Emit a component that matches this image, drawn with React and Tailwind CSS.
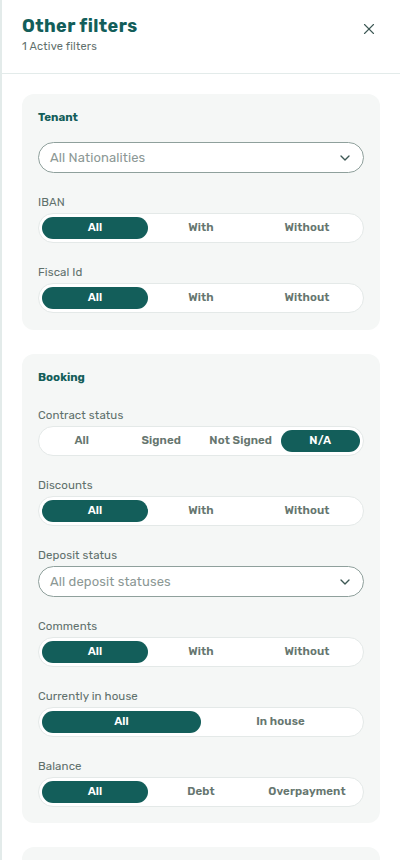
import React, { useState } from "react";
import { X, ChevronDown } from "lucide-react";

const Segmented = ({ options, value }) => (
  <div className="flex h-[30px] rounded-full border border-[#e4e9e8] bg-white p-[3px]">
    {options.map((opt) => (
      <div
        key={opt}
        className={`flex flex-1 items-center justify-center rounded-full text-[11.5px] font-semibold tracking-[0.1px] ${
          opt === value ? "bg-[#135e5a] text-white" : "text-[#66766f]"
        }`}
      >
        {opt}
      </div>
    ))}
  </div>
);

const Select = ({ placeholder }) => (
  <div className="flex h-[31px] items-center justify-between rounded-full border border-[#8fa09c] bg-white pl-[11px] pr-[10px]">
    <span className="text-[13px] tracking-[0.1px] text-[#8c9895]">{placeholder}</span>
    <ChevronDown size={16} strokeWidth={2} className="text-[#3d5854]" />
  </div>
);

const Field = ({ label, children }) => (
  <div className="flex flex-col gap-[3px]">
    <span className="text-[11.5px] leading-[16px] tracking-[0.1px] text-[#5f706c]">{label}</span>
    {children}
  </div>
);

const Card = ({ title, first, children }) => (
  <div className={`rounded-xl bg-[#f5f7f6] px-4 pt-4 ${first ? "pb-[17px]" : "pb-4"}`}>
    <h3 className="text-[11.5px] font-bold leading-[14px] text-[#135e5a]">{title}</h3>
    <div className={`${first ? "mt-[18px]" : "mt-[23px]"} flex flex-col gap-[21px]`}>{children}</div>
  </div>
);

export default function App() {
  const [open] = useState(true);
  const yesNo = ["All", "With", "Without"];

  return (
    open && (
      <div
        className="min-h-[860px] w-[400px] border-l-2 border-[#e3ebea] bg-white"
        style={{ fontFamily: "Rubik, Inter, 'Noto Sans', sans-serif" }}
      >
        <div className="flex items-start justify-between border-b border-[#e3ebea] pb-[19px] pl-5 pr-[22px] pt-[15px]">
          <div>
            <h2 className="text-[18px] font-bold leading-[22px] tracking-[0.4px] text-[#135e5a]">Other filters</h2>
            <p className="mt-[3px] text-[11px] leading-[14px] tracking-[0.2px] text-[#5f706c]">1 Active filters</p>
          </div>
          <X size={18} strokeWidth={1.5} className="mt-[5px] text-[#3d5854]" />
        </div>

        <div className="flex flex-col gap-6 px-5 pt-5">
          <Card title="Tenant" first>
            <Select placeholder="All Nationalities" />
            <Field label="IBAN">
              <Segmented options={yesNo} value="All" />
            </Field>
            <Field label="Fiscal Id">
              <Segmented options={yesNo} value="All" />
            </Field>
          </Card>

          <Card title="Booking">
            <Field label="Contract status">
              <Segmented options={["All", "Signed", "Not Signed", "N/A"]} value="N/A" />
            </Field>
            <Field label="Discounts">
              <Segmented options={yesNo} value="All" />
            </Field>
            <Field label="Deposit status">
              <Select placeholder="All deposit statuses" />
            </Field>
            <Field label="Comments">
              <Segmented options={yesNo} value="All" />
            </Field>
            <Field label="Currently in house">
              <Segmented options={["All", "In house"]} value="All" />
            </Field>
            <Field label="Balance">
              <Segmented options={["All", "Debt", "Overpayment"]} value="All" />
            </Field>
          </Card>

          <div className="h-[40px] rounded-t-xl bg-[#f5f7f6]" />
        </div>
      </div>
    )
  );
}
